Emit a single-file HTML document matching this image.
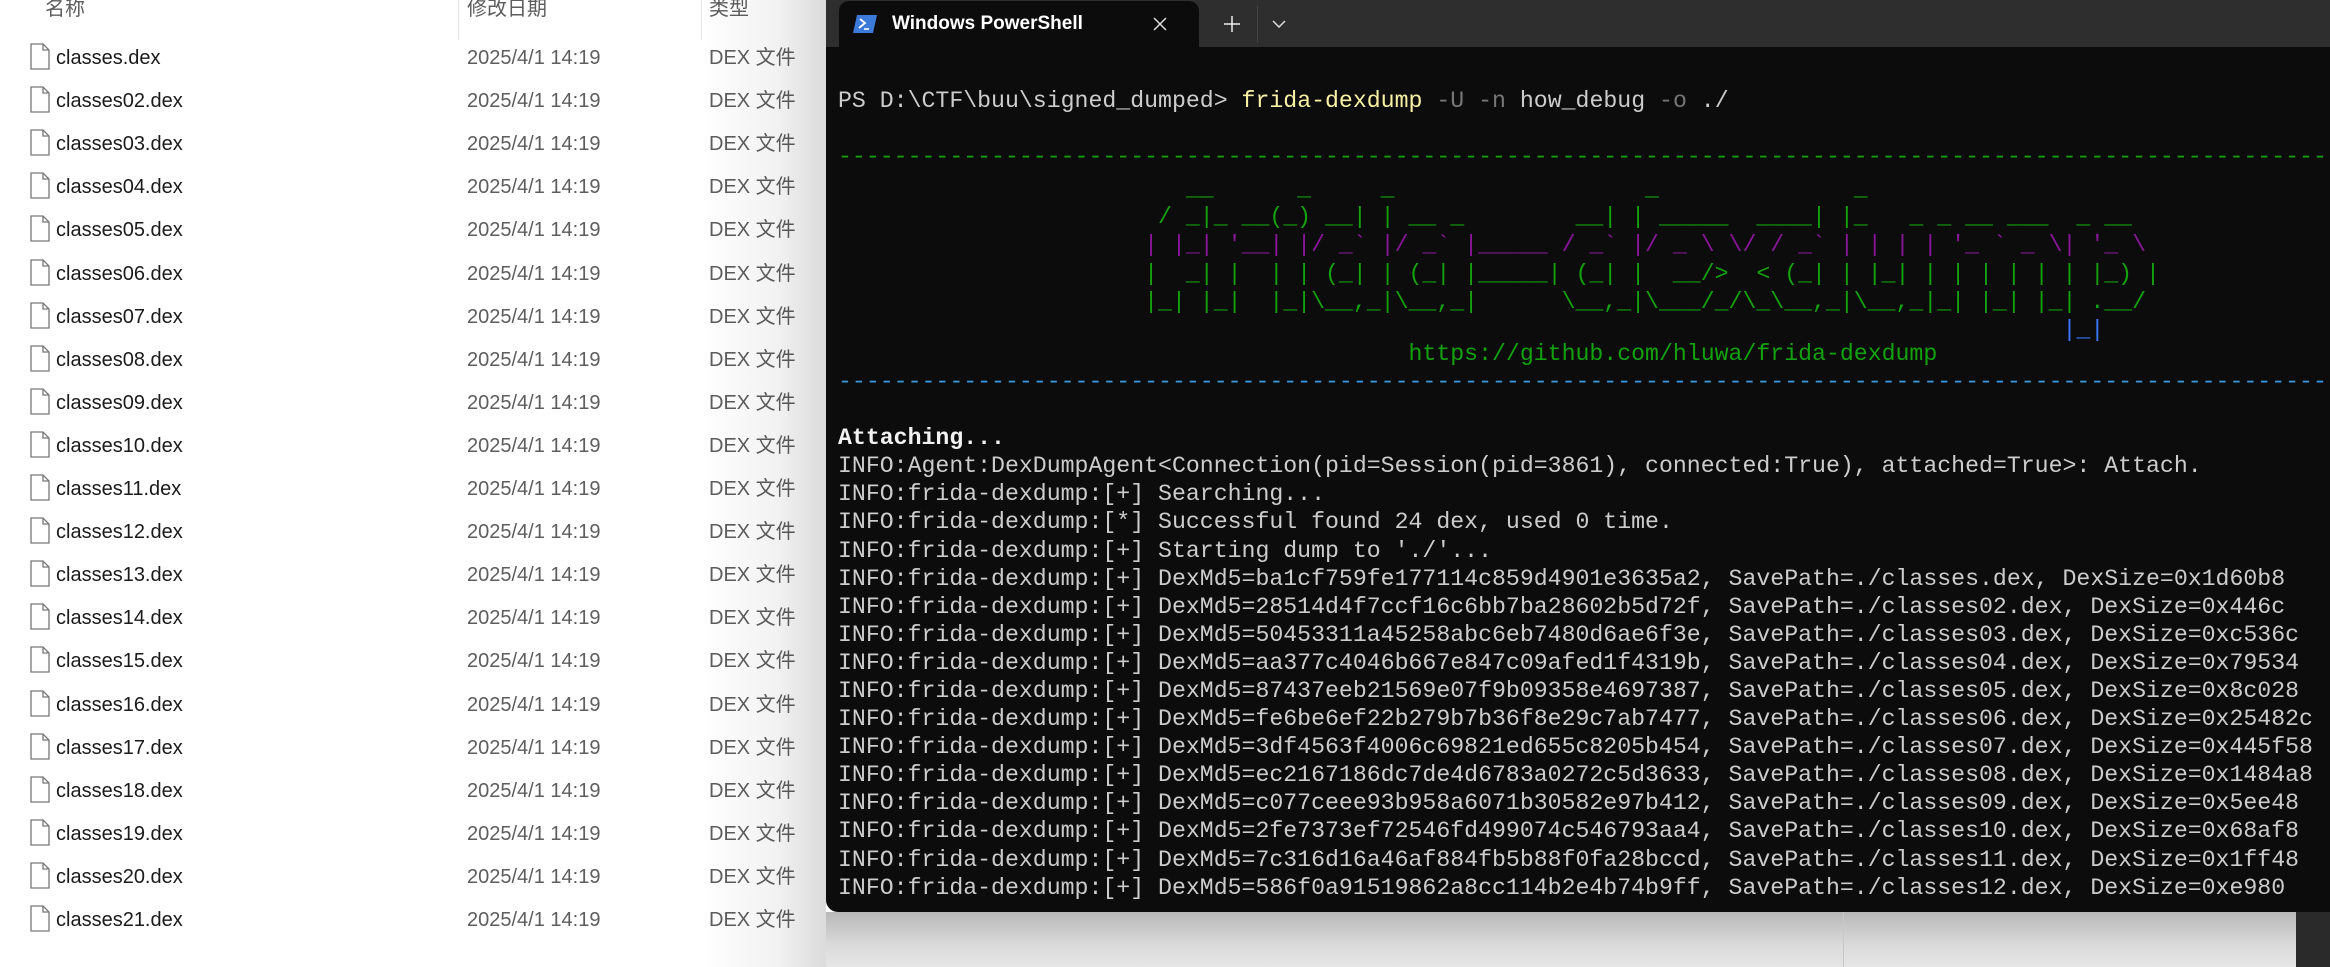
<!DOCTYPE html>
<html><head><meta charset="utf-8"><style>
*{margin:0;padding:0;box-sizing:border-box}
body{width:2330px;height:967px;overflow:hidden;background:#fff;position:relative;font-family:"Liberation Sans","Noto Sans CJK SC",sans-serif}
.hdr{position:absolute;top:-3px;font-size:20px;line-height:24px;color:#5d5d5d}
.sep{position:absolute;top:0;width:1px;height:40px;background:#e5e5e5}
.row{position:absolute;left:0;width:826px;height:43px;font-size:20px;line-height:24px}
.row .ic{position:absolute;left:30px;top:8px;width:20px;height:27px}
.row span{position:absolute;top:11px;white-space:nowrap}
.row .n{left:56px;color:#1a1a1a}
.row .d{left:467px;color:#5d5d5d}
.row .t{left:709px;color:#5d5d5d}
.shadow{position:absolute;left:700px;top:0;width:126px;height:967px;background:linear-gradient(to right,rgba(0,0,0,0),rgba(0,0,0,0.05) 60%,rgba(0,0,0,0.14))}
.below{position:absolute;left:826px;top:912px;width:1504px;height:55px;background:linear-gradient(to bottom,#b8b8b8,#dadada 60%,#e6e6e6)}
.term{position:absolute;left:826px;top:0;width:1504px;height:912px;background:#0c0c0c;border-bottom-left-radius:12px;overflow:hidden}
.tabbar{position:absolute;left:0;top:0;width:1504px;height:47px;background:#2e2e2e}
.tab{position:absolute;left:13px;top:1px;width:360px;height:46px;background:#0c0c0c;border-radius:10px 10px 0 0}
pre{position:absolute;left:12px;top:87px;font-family:"Liberation Mono",monospace;font-size:23.2px;line-height:28.1px;color:#cccccc;white-space:pre}
.g{color:#13a10e}.p{color:#881798}.b{color:#3b78ff}.bd{color:#3a96dd}.y{color:#f9f1a5}.gr{color:#767676}.w{color:#f2f2f2;font-weight:bold}
.art{position:relative;top:4px}
</style></head><body>
<div class="hdr" style="left:45px">名称</div>
<div class="hdr" style="left:467px">修改日期</div>
<div class="hdr" style="left:709px">类型</div>
<div class="sep" style="left:458px"></div>
<div class="sep" style="left:701px"></div>
<div id="rows"></div>
<div style="position:absolute;left:966px;top:903px;font-size:20px;color:#666">504 KB</div>
<div class="shadow"></div>
<div class="below"></div>
<div style="position:absolute;left:1843px;top:912px;width:1px;height:55px;background:#c8c8c8"></div>
<div style="position:absolute;left:2296px;top:912px;width:34px;height:55px;background:#2a2a2a"></div>
<div class="term">
<div class="tabbar"></div>
<div class="tab"></div>
<svg style="position:absolute;left:27px;top:15px" width="24" height="18" viewBox="0 0 24 18"><path d="M4 0H24L20 18H0Z" fill="#3b7ad8"/><path d="M7 4l5 4-6 5" stroke="#fff" stroke-width="1.8" fill="none"/><path d="M11 14h5" stroke="#fff" stroke-width="1.6"/></svg>
<div style="position:absolute;left:66px;top:13px;font-size:19px;color:#fff;font-weight:bold">Windows PowerShell</div>
<svg style="position:absolute;left:327px;top:17px" width="14" height="14"><path d="M1 1L13 13M13 1L1 13" stroke="#ddd" stroke-width="1.5"/></svg>
<svg style="position:absolute;left:398px;top:16px" width="16" height="16"><path d="M8 0V16M0 8H16" stroke="#eee" stroke-width="1.5"/></svg>
<div style="position:absolute;left:431px;top:6px;width:1px;height:36px;background:#444"></div>
<svg style="position:absolute;left:446px;top:20px" width="14" height="8"><path d="M1 1L7 7L13 1" stroke="#ddd" stroke-width="1.5" fill="none"/></svg>
<pre>PS D:\CTF\buu\signed_dumped&gt; <span class="y">frida-dexdump</span> <span class="gr">-U</span> <span class="gr">-n</span> how_debug <span class="gr">-o</span> ./

<span class="g">------------------------------------------------------------------------------------------------------------------------</span>
<span class="art"><span class="g">                         __      _     _                  _              _
                       / _|_ __(_) __| | __ _        __| | _____  ____| |_   _ _ __ ___  _ __</span>
<span class="p">                      | |_| '__| |/ _` |/ _` |_____ / _` |/ _ \ \/ / _` | | | | '_ ` _ \| '_ \</span>
<span class="g">                      |  _| |  | | (_| | (_| |_____| (_| |  __/&gt;  &lt; (_| | |_| | | | | | | |_) |
                      |_| |_|  |_|\__,_|\__,_|      \__,_|\___/_/\_\__,_|\__,_|_| |_| |_| .__/</span>
<span class="b">                                                                                        |_|</span></span>
<span class="g">                                         https://github.com/hluwa/frida-dexdump</span>
<span class="bd">------------------------------------------------------------------------------------------------------------------------</span>

<span class="w">Attaching...</span>
INFO:Agent:DexDumpAgent&lt;Connection(pid=Session(pid=3861), connected:True), attached=True&gt;: Attach.
INFO:frida-dexdump:[+] Searching...
INFO:frida-dexdump:[*] Successful found 24 dex, used 0 time.
INFO:frida-dexdump:[+] Starting dump to './'...
INFO:frida-dexdump:[+] DexMd5=ba1cf759fe177114c859d4901e3635a2, SavePath=./classes.dex, DexSize=0x1d60b8
INFO:frida-dexdump:[+] DexMd5=28514d4f7ccf16c6bb7ba28602b5d72f, SavePath=./classes02.dex, DexSize=0x446c
INFO:frida-dexdump:[+] DexMd5=50453311a45258abc6eb7480d6ae6f3e, SavePath=./classes03.dex, DexSize=0xc536c
INFO:frida-dexdump:[+] DexMd5=aa377c4046b667e847c09afed1f4319b, SavePath=./classes04.dex, DexSize=0x79534
INFO:frida-dexdump:[+] DexMd5=87437eeb21569e07f9b09358e4697387, SavePath=./classes05.dex, DexSize=0x8c028
INFO:frida-dexdump:[+] DexMd5=fe6be6ef22b279b7b36f8e29c7ab7477, SavePath=./classes06.dex, DexSize=0x25482c
INFO:frida-dexdump:[+] DexMd5=3df4563f4006c69821ed655c8205b454, SavePath=./classes07.dex, DexSize=0x445f58
INFO:frida-dexdump:[+] DexMd5=ec2167186dc7de4d6783a0272c5d3633, SavePath=./classes08.dex, DexSize=0x1484a8
INFO:frida-dexdump:[+] DexMd5=c077ceee93b958a6071b30582e97b412, SavePath=./classes09.dex, DexSize=0x5ee48
INFO:frida-dexdump:[+] DexMd5=2fe7373ef72546fd499074c546793aa4, SavePath=./classes10.dex, DexSize=0x68af8
INFO:frida-dexdump:[+] DexMd5=7c316d16a46af884fb5b88f0fa28bccd, SavePath=./classes11.dex, DexSize=0x1ff48
INFO:frida-dexdump:[+] DexMd5=586f0a91519862a8cc114b2e4b74b9ff, SavePath=./classes12.dex, DexSize=0xe980</pre>
</div>
<script>
var h='';
for(var i=0;i<21;i++){
 var nm=i==0?'classes.dex':'classes'+(i+1<10?'0':'')+(i+1)+'.dex';
 h+='<div class="row" style="top:'+(35+43.1*i)+'px"><svg class="ic" viewBox="0 0 20 27"><path d="M1 1H13L19 7V26H1Z" fill="#fff" stroke="#777" stroke-width="1.3"/><path d="M13 1V7H19" fill="none" stroke="#777" stroke-width="1.3"/></svg><span class="n">'+nm+'</span><span class="d">2025/4/1 14:19</span><span class="t">DEX 文件</span></div>';
}
document.getElementById('rows').innerHTML=h;
</script>
</body></html>
